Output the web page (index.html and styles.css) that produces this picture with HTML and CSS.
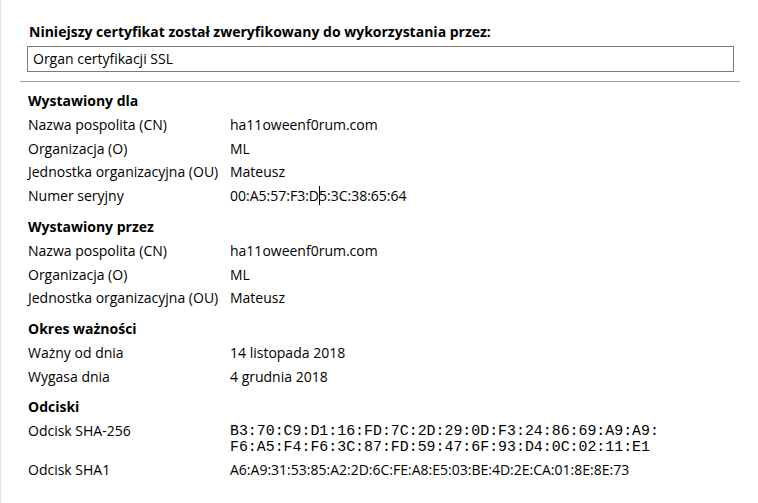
FILE: index.html
```html
<!DOCTYPE html>
<html lang="pl">
<head>
<meta charset="utf-8">
<title>Certyfikat</title>
<link rel="stylesheet" href="styles.css">
</head>
<body>
<div class="page">
  <div class="purpose">
    <div class="purpose-title">Niniejszy certyfikat został zweryfikowany do wykorzystania przez:</div>
    <div class="purpose-box">Organ certyfikacji SSL</div>
  </div>
  <div class="sep"></div>
  <div class="details">
    <section class="group">
      <h2 class="group-title">Wystawiony dla</h2>
      <div class="row"><span class="label">Nazwa pospolita (CN)</span><span class="value">ha11oweenf0rum.com</span></div>
      <div class="row"><span class="label">Organizacja (O)</span><span class="value">ML</span></div>
      <div class="row"><span class="label">Jednostka organizacyjna (OU)</span><span class="value">Mateusz</span></div>
      <div class="row"><span class="label">Numer seryjny</span><span class="value">00:A5:57:F3:D<span class="caret"></span>5:3C:38:65:64</span></div>
    </section>
    <section class="group">
      <h2 class="group-title">Wystawiony przez</h2>
      <div class="row"><span class="label">Nazwa pospolita (CN)</span><span class="value">ha11oweenf0rum.com</span></div>
      <div class="row"><span class="label">Organizacja (O)</span><span class="value">ML</span></div>
      <div class="row"><span class="label">Jednostka organizacyjna (OU)</span><span class="value">Mateusz</span></div>
    </section>
    <section class="group">
      <h2 class="group-title">Okres ważności</h2>
      <div class="row"><span class="label">Ważny od dnia</span><span class="value">14 listopada 2018</span></div>
      <div class="row"><span class="label">Wygasa dnia</span><span class="value">4 grudnia 2018</span></div>
    </section>
    <section class="group">
      <h2 class="group-title">Odciski</h2>
      <div class="row row-mono"><span class="label">Odcisk SHA-256</span><span class="value mono">B3:70:C9:D1:16:FD:7C:2D:29:0D:F3:24:86:69:A9:A9:<br>F6:A5:F4:F6:3C:87:FD:59:47:6F:93:D4:0C:02:11:E1</span></div>
      <div class="row"><span class="label">Odcisk SHA1</span><span class="value">A6:A9:31:53:85:A2:2D:6C:FE:A8:E5:03:BE:4D:2E:CA:01:8E:8E:73</span></div>
    </section>
  </div>
</div>
</body>
</html>
```
FILE: styles.css
```css
html, body {
  margin: 0;
  padding: 0;
  background: #ffffff;
}
body {
  font-family: "Open Sans", "Noto Sans", "Liberation Sans", sans-serif;
  font-size: 14px;
  color: #000000;
  height: 503px;
  overflow: hidden;
}
.page {
  box-sizing: border-box;
  height: 503px;
  border-left: 1px solid #e4e4e4;
  padding-top: 20px;
}
.purpose {
  padding-left: 26px;
  width: 707px;
}
.purpose-title {
  font-weight: 700;
  line-height: 24px;
  padding-left: 2px;
}
.purpose-box {
  margin-top: 2px;
  border: 1px solid #7a7a7a;
  line-height: 24px;
  padding-left: 5px;
}
.sep {
  margin: 9px 0 0 19px;
  width: 720px;
  height: 1px;
  background: #a0a0a0;
}
.details {
  padding-left: 27px;
  padding-top: 6px;
}
.group {
  margin-bottom: 6px;
}
.group-title {
  margin: 0;
  font-size: 14px;
  font-weight: 700;
  line-height: 25px;
}
.row {
  display: grid;
  grid-template-columns: 202px 1fr;
  line-height: 23.7px;
}
.row-mono {
  padding-bottom: 3px;
}
.mono {
  font-family: "Liberation Mono", "Courier New", monospace;
  font-size: 14.9px;
  line-height: 16px;
  padding-top: 4px;
}
.caret {
  display: inline-block;
  width: 1px;
  height: 19px;
  margin-right: -1px;
  background: #000000;
  vertical-align: -4px;
}
```
